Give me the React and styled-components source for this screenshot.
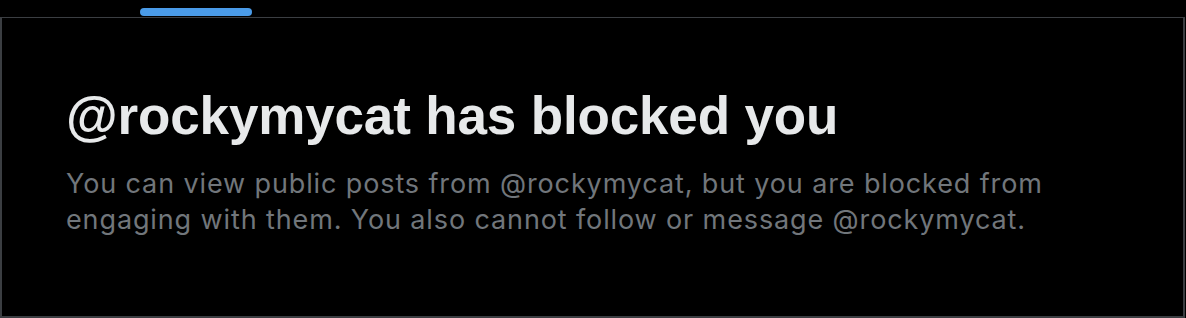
import styled, { createGlobalStyle } from "styled-components";

const GlobalStyle = createGlobalStyle`
  html, body {
    margin: 0;
    padding: 0;
    background: #000;
  }
`;

const Page = styled.div`
  width: 1186px;
  height: 318px;
  background: #000;
  display: flex;
  flex-direction: column;
  font-family: "Liberation Sans", Arial, sans-serif;
  box-sizing: border-box;
`;

const TabStrip = styled.div`
  height: 17px;
  display: flex;
  align-items: flex-start;
  padding-left: 140px;
  box-sizing: border-box;
`;

const Indicator = styled.div`
  margin-top: 8px;
  width: 112px;
  height: 8px;
  border-radius: 4px;
  background: #4a9be8;
`;

const Panel = styled.section`
  flex: 1;
  border-top: 1px solid #3b3e42;
  border-left: 2px solid #3b3e42;
  border-right: 2px solid #3b3e42;
  border-bottom: 2px solid #3b3e42;
  margin-right: 1px;
  padding: 66px 64px 0;
  box-sizing: border-box;
`;

const Title = styled.h1`
  margin: 0 0 18px;
  font-size: 53px;
  line-height: 64px;
  font-weight: 700;
  color: #e7e9ea;
  letter-spacing: -0.15px;
`;

const Message = styled.p`
  margin: 0;
  font-family: Inter, "Liberation Sans", sans-serif;
  font-size: 27px;
  line-height: 36px;
  color: #71767b;
  letter-spacing: 0.88px;
`;

export default function App() {
  const handle = "@rockymycat";
  const title = `${handle} has blocked you`;
  const message = `You can view public posts from ${handle}, but you are blocked from engaging with them. You also cannot follow or message ${handle}.`;
  return (
    <Page>
      <GlobalStyle />
      <TabStrip>
        <Indicator />
      </TabStrip>
      <Panel>
        <Title>{title}</Title>
        <Message>{message}</Message>
      </Panel>
    </Page>
  );
}
